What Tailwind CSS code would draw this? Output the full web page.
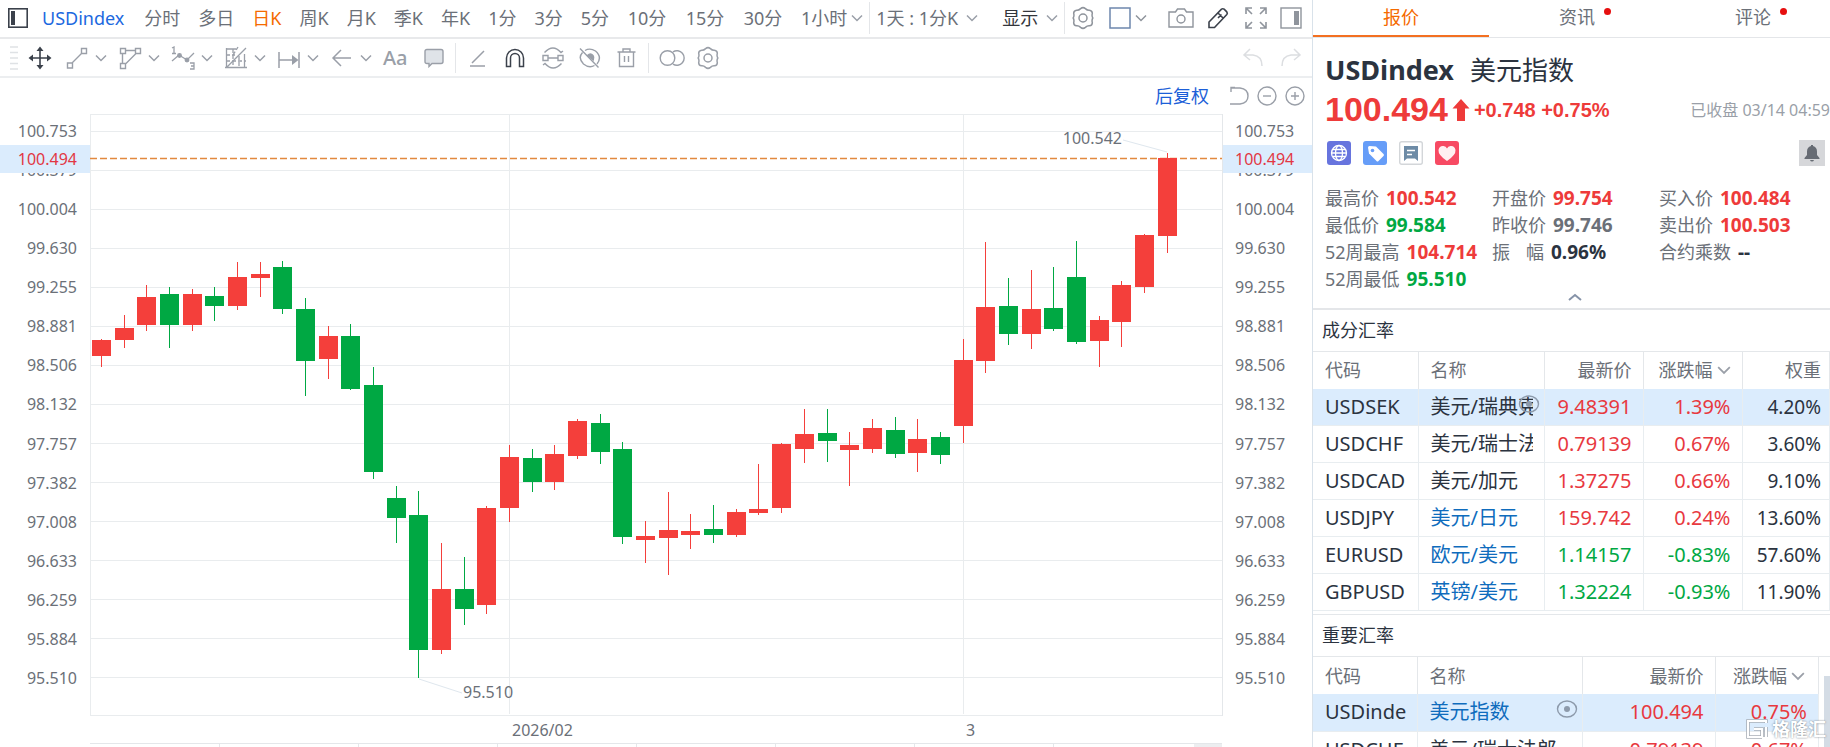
<!DOCTYPE html>
<html lang="zh-CN">
<head>
  <meta charset="UTF-8">
  <meta name="viewport" content="width=device-width, initial-scale=1.0">
  <title>USDindex 美元指数</title>
  <script src="https://cdn.jsdelivr.net/npm/@tailwindcss/browser@4"></script>
</head>
<body class="flex h-screen overflow-hidden bg-white font-['Noto_Sans','Noto_Sans_CJK_SC',sans-serif] text-[#6b7078]">

  <!-- Shared icons -->
  <svg class="hidden">
    <symbol id="chevron" viewBox="0 0 12 12"><path d="M1 3.5 6 8.5 11 3.5" fill="none" stroke="currentColor" stroke-width="1.5"/></symbol>
    <symbol id="eye" viewBox="0 0 22 18"><ellipse cx="11" cy="9" rx="9.5" ry="8" fill="none" stroke="currentColor" stroke-width="1.4"/><circle cx="11" cy="9" r="3" fill="currentColor"/></symbol>
    <symbol id="gear" viewBox="0 0 24 24"><path d="M9.6 2.6Q12 .6 14.4 2.6 16.200 4.400 18.400 4.200 21.400 4.600 21.300 7.500 20.600 10 21.800 12 20.600 14 21.300 16.500 21.400 19.400 18.400 19.800 16.200 19.600 14.400 21.400 12 23.400 9.600 21.400 7.800 19.600 5.600 19.800 2.600 19.400 2.700 16.500 3.400 14 2.200 12 3.400 10 2.700 7.500 2.600 4.600 5.600 4.200 7.800 4.400 9.600 2.600Z" fill="none" stroke="currentColor" stroke-width="1.5"/><circle cx="12" cy="12" r="4" fill="none" stroke="currentColor" stroke-width="1.5"/></symbol>
  </svg>

  <main class="flex min-w-0 flex-1 flex-col">

    <!-- Period bar -->
    <header class="flex h-[39px] shrink-0 items-center gap-[18px] overflow-hidden whitespace-nowrap border-b-2 border-[#e8e9eb] pb-0.5 pl-2 text-lg leading-9">
      <button class="-mr-1" aria-label="侧栏"><svg class="size-5" viewBox="0 0 20 20"><rect x=".8" y=".8" width="18.4" height="18.4" fill="none" stroke="#3b414b" stroke-width="1.6"/><rect x="3" y="3" width="4" height="14" fill="#3b414b"/></svg></button>
      <a href="#" class="mr-0.5 text-[#1c69e0]">USDindex</a>
      <button>分时</button>
      <button>多日</button>
      <button class="text-[#f56a00]">日K</button>
      <button>周K</button>
      <button>月K</button>
      <button>季K</button>
      <button>年K</button>
      <button>1分</button>
      <button>3分</button>
      <button>5分</button>
      <button class="w-10">10分</button>
      <button class="w-10">15分</button>
      <button class="w-10">30分</button>
      <button class="-mr-3 flex items-center gap-1">1小时<svg class="size-3 text-[#9a9fa8]"><use href="#chevron"/></svg></button>
      <span class="-mr-3 h-8 w-px bg-[#e4e6e9]"></span>
      <button class="flex items-center gap-2">1天 : 1分K<svg class="size-3 text-[#9a9fa8]"><use href="#chevron"/></svg></button>
      <button class="-mr-3 ml-1.5 flex items-center gap-2 text-[#33363b]">显示<svg class="size-3 text-[#9a9fa8]"><use href="#chevron"/></svg></button>
      <span class="-mr-3 h-8 w-px bg-[#e4e6e9]"></span>
      <div class="flex flex-1 items-center text-[#8f949c]">
        <button class="mr-3.5" aria-label="指标设置"><svg class="size-6"><use href="#gear"/></svg></button>
        <button class="flex items-center gap-1" aria-label="布局"><svg class="size-[22px]" viewBox="0 0 22 22"><rect x="1" y="1" width="20" height="20" fill="none" stroke="#6d87ad" stroke-width="1.5"/></svg><svg class="size-3"><use href="#chevron"/></svg></button>
        <button class="ml-auto" aria-label="截图"><svg class="h-5 w-[26px]" viewBox="0 0 26 20"><path d="M1 4h6.500L9.500 1h7l2 3H25v15H1z" fill="none" stroke="currentColor" stroke-width="1.4"/><circle cx="13" cy="11" r="4" fill="none" stroke="currentColor" stroke-width="1.4"/></svg></button>
        <button class="ml-3" aria-label="画线"><svg class="size-6 text-[#3b414b]" viewBox="0 0 24 24" fill="none" stroke="currentColor" stroke-width="1.600"><path d="M3 21.500V16L15.500 3.200q1.300-1 2.600 0l2.700 2.700q1 1.300 0 2.600L8.500 21.500zM12 7l5 5M15.500 8.500l-3.500 3.500"/></svg></button>
        <button class="ml-3.5" aria-label="全屏"><svg class="size-6" viewBox="0 0 24 24" fill="none" stroke="currentColor" stroke-width="1.600"><path d="M2 8V2h6M2 2l6 6M16 2h6v6M22 2l-6 6M2 16v6h6M2 22l6-6M16 22h6v-6M22 22l-6-6"/></svg></button>
        <button class="ml-3 pr-2.5" aria-label="右侧栏"><svg class="size-[22px]" viewBox="0 0 22 22"><rect x="1" y="1" width="20" height="20" fill="none" stroke="currentColor" stroke-width="1.4"/><path d="M14 4h5v14h-5z" fill="currentColor"/></svg></button>
      </div>
    </header>

    <!-- Drawing tools -->
    <div class="flex h-[39px] shrink-0 items-center border-b-2 border-[#eceef0] pl-2 text-[#9a9fa8]">
      <svg class="mr-2.5 ml-0.5 h-6 w-2" viewBox="0 0 8 24"><path d="M0 1h8M0 6.500h8M0 12h8M0 17.500h8M0 23h8" stroke="#dfe2e5" stroke-width="1.500"/></svg>
      <button class="w-[37px]" aria-label="移动"><svg class="size-6 text-[#3b414b]" viewBox="0 0 24 24"><path d="M12 3v18M3 12h18" stroke="currentColor" stroke-width="1.600"/><path d="M12 .5 15.500 5h-7zM12 23.500 15.500 19h-7zM.5 12 5 8.500v7zM23.500 12 19 8.500v7z" fill="currentColor"/></svg></button>
      <button class="flex w-[53px] items-center gap-1.5" aria-label="线段"><svg class="size-6" viewBox="0 0 24 24" fill="none" stroke="currentColor" stroke-width="1.400"><path d="M7 17 17 7M2.500 17h5v5h-5zM16.500 2.500h5v5h-5z"/></svg><svg class="size-3"><use href="#chevron"/></svg></button>
      <button class="flex w-[53px] items-center gap-1.5" aria-label="图形"><svg class="size-6" viewBox="0 0 24 24" fill="none" stroke="currentColor" stroke-width="1.400"><path d="M2.500 2.500h5v5h-5zM17.500 2.500h5v5h-5zM2.500 17.500h5v5h-5zM7.500 4.500h10M4.500 7.500v10M7.500 18 18 7.500"/></svg><svg class="size-3"><use href="#chevron"/></svg></button>
      <button class="flex w-[53px] items-center gap-1.5" aria-label="波浪"><svg class="size-6" viewBox="0 0 24 24" fill="none" stroke="currentColor" stroke-width="1.300"><path d="M1 15 8 9l8 5 7-7M1 2l2-1v6M1 7.500h4M19 17h4v6h-4M20 20h3"/><circle cx="8.500" cy="9.500" r="1.800" fill="currentColor"/><circle cx="16" cy="14" r="1.800" fill="currentColor"/></svg><svg class="size-3"><use href="#chevron"/></svg></button>
      <button class="flex w-[53px] items-center gap-1.5" aria-label="斐波那契"><svg class="size-6" viewBox="0 0 24 24" fill="none" stroke="currentColor" stroke-width="1.300"><path d="M2.500 2v20M1 21.500h22M20.500 8v14M2 3h10M2.500 21.500 22 2"/><path d="M2 9h9M2 15h20M9 3v18M15 10v11M9 9l5-8" stroke-dasharray="4 2"/></svg><svg class="size-3"><use href="#chevron"/></svg></button>
      <button class="flex w-[53px] items-center gap-1.5" aria-label="区间"><svg class="size-6" viewBox="0 0 24 24"><path d="M2 6v16M22 6v16M2 14h14" stroke="currentColor" stroke-width="1.500"/><path d="M21.500 14 15 9v10z" fill="currentColor"/></svg><svg class="size-3"><use href="#chevron"/></svg></button>
      <button class="flex w-[53px] items-center gap-1.5" aria-label="箭头"><svg class="size-6" viewBox="0 0 24 24" fill="none" stroke="currentColor" stroke-width="1.500"><path d="M21 12H3M11 4l-8 8 8 8"/></svg><svg class="size-3"><use href="#chevron"/></svg></button>
      <button class="w-[37px] text-left text-xl font-medium" aria-label="文字">Aa</button>
      <button class="w-[35px] pl-1" aria-label="气泡"><svg class="size-5" viewBox="0 0 20 20"><path d="M3 1.500h14q2 0 2 2v10q0 2-2 2H8L5 18.500v-3H3q-2 0-2-2v-10q0-2 2-2z" fill="#dfe3e8" stroke="currentColor" stroke-width="1.400"/></svg></button>
      <span class="mr-3 h-[30px] w-px bg-[#e4e6e9]"></span>
      <button class="w-[37px]" aria-label="角度"><svg class="size-5" viewBox="0 0 20 20"><path d="M16 3 4 15M2 18h15" stroke="currentColor" stroke-width="1.500"/></svg></button>
      <button class="w-[37px]" aria-label="磁铁"><svg class="size-5 text-[#3b414b]" viewBox="0 0 20 20" fill="none" stroke="currentColor" stroke-width="1.500"><path d="M1.500 18.500V10a8.500 8.500 0 0 1 17 0v8.500h-4V10a4.500 4.500 0 0 0-9 0v8.500z"/></svg></button>
      <button class="w-[37px]" aria-label="连续绘制"><svg class="size-[22px]" viewBox="0 0 22 22" fill="none" stroke="currentColor" stroke-width="1.400"><path d="M1 8.500h5v5H1zM16 8.500h5v5h-5zM6 11h10M2.500 5.500Q11-3.500 19 5.500l2-1.500M19.500 16.500Q11 25.500 3 16.500L1 18"/></svg></button>
      <button class="w-[37px]" aria-label="隐藏"><svg class="size-[22px]" viewBox="0 0 22 22" fill="none" stroke="currentColor" stroke-width="1.400"><path d="M6 3.500Q11 .5 16.500 4 23.500 10 18 17M15.500 18.500Q10 21.500 4.500 17-1.500 11 3.500 5.500M1 1.500l18.500 19"/><path d="M8.500 8.500q3-3 5.500 0 1.500 2 .3 4.500z" fill="currentColor"/></svg></button>
      <button class="w-8" aria-label="删除"><svg class="size-[21px]" viewBox="0 0 21 21" fill="none" stroke="currentColor" stroke-width="1.400"><path d="M1.500 5h18M7 5V2h7v3M3.500 8v11.500h14V8M3.500 5v3M17.500 5v3M8.500 9v6M12.500 9v6"/></svg></button>
      <span class="mr-2.5 h-[30px] w-px bg-[#e4e6e9]"></span>
      <button class="w-[37px]" aria-label="对比"><svg class="h-5 w-[26px]" viewBox="0 0 26 20" fill="none" stroke="currentColor" stroke-width="1.400"><circle cx="8.500" cy="10" r="7.300"/><path d="M14 3.800a7.300 7.300 0 1 1 0 12.400"/></svg></button>
      <button aria-label="设置"><svg class="size-6"><use href="#gear"/></svg></button>
      <div class="ml-auto flex gap-4 pr-2.5 text-[#dcdee1]">
        <button aria-label="撤销"><svg class="size-[22px]" viewBox="0 0 22 22" fill="none" stroke="currentColor" stroke-width="1.500"><path d="M8 2 2 8l6 5M2 8h9q9 1 9 11"/></svg></button>
        <button aria-label="重做"><svg class="size-[22px]" viewBox="0 0 22 22" fill="none" stroke="currentColor" stroke-width="1.500"><path d="M14 2l6 6-6 5M20 8h-9q-9 1-9 11"/></svg></button>
      </div>
    </div>

    <!-- Chart options -->
    <div class="flex h-9 shrink-0 items-center justify-end gap-2 pr-[7px] text-[#9a9fa8]">
      <button class="mr-3 text-lg text-[#1c5fd8]">后复权</button>
      <button aria-label="还原"><svg class="size-5" viewBox="0 0 20 20" fill="none" stroke="currentColor" stroke-width="1.400"><path d="M2 6V1.500h4M2 2h9q8 1 8 8t-8 8H1"/></svg></button>
      <button aria-label="缩小"><svg class="size-5" viewBox="0 0 20 20" fill="none" stroke="currentColor" stroke-width="1.400"><circle cx="10" cy="10" r="9"/><path d="M6 10h8"/></svg></button>
      <button aria-label="放大"><svg class="size-5" viewBox="0 0 20 20" fill="none" stroke="currentColor" stroke-width="1.400"><circle cx="10" cy="10" r="9"/><path d="M6 10h8M10 6v8"/></svg></button>
    </div>

    <!-- K-line chart -->
    <div class="flex min-h-0 flex-1 text-base">
      <div class="relative w-[90px] shrink-0">
        <div id="axisLeft" class="flex h-full flex-col justify-between pt-1 pr-[13px] pb-[25px] text-right leading-[26px]"></div>
        <div class="absolute inset-x-0 top-[31px] bg-[#dbecfd] pr-[13px] text-right leading-7 text-[#e23744]">100.494</div>
      </div>
      <div class="relative min-w-0 flex-1">
        <svg id="chart" class="absolute inset-0 h-full w-full" viewBox="90 114 1132 602" preserveAspectRatio="none"></svg>
        <span class="absolute top-3 right-[100px] leading-6">100.542</span>
        <span class="absolute bottom-3 left-[373px] leading-6">95.510</span>
      </div>
      <div class="relative w-[90px] shrink-0 border-l border-[#e4e7ea]">
        <div id="axisRight" class="flex h-full flex-col justify-between pt-1 pb-[25px] pl-3 leading-[26px]"></div>
        <div class="absolute inset-x-0 top-[31px] bg-[#dbecfd] pl-3 leading-7 text-[#e23744]">100.494</div>
      </div>
    </div>

    <!-- Time axis -->
    <div class="mx-[90px] flex h-[27px] shrink-0 pl-[422px] text-base leading-7">
      <span class="w-[454px]">2026/02</span>
      <span>3</span>
    </div>
    <div class="mx-[90px] flex h-1 shrink-0 overflow-hidden border-t border-[#e4e7ea]">
      <span class="w-[130px] shrink-0 border-r border-[#e4e7ea]"></span>
      <span class="w-[139px] shrink-0 border-r border-[#e4e7ea]"></span>
      <span class="w-[139px] shrink-0 border-r border-[#e4e7ea]"></span>
      <span class="w-[139px] shrink-0 border-r border-[#e4e7ea]"></span>
      <span class="w-[139px] shrink-0 border-r border-[#e4e7ea]"></span>
      <span class="w-[139px] shrink-0 border-r border-[#e4e7ea]"></span>
      <span class="w-[139px] shrink-0 border-r border-[#e4e7ea]"></span>
      <span class="ml-auto w-7 bg-[#eceef0]"></span>
    </div>
  </main>

  <!-- Quote panel -->
  <aside class="relative flex w-[518px] shrink-0 flex-col overflow-hidden border-l border-[#d9e2ea]">
    <nav class="flex h-[38px] shrink-0 border-b border-[#e4e6e9] text-lg leading-8">
      <button class="w-44 shrink-0 border-b-2 border-[#f37021] pb-px text-[#f56a00]">报价</button>
      <button class="relative w-44 shrink-0 pb-[3px]">资讯<i class="absolute top-2 right-[54px] size-[7px] rounded-full bg-[#e60f0f]"></i></button>
      <button class="relative w-44 shrink-0 pb-[3px]">评论<i class="absolute top-2 right-[54px] size-[7px] rounded-full bg-[#e60f0f]"></i></button>
    </nav>

    <section class="shrink-0 border-b-2 border-[#e4e6e9] pl-3">
      <h1 class="mt-3.5 flex items-center gap-4 text-[26px] leading-9 text-[#2b333f]"><b class="text-[27px]">USDindex</b><span>美元指数</span></h1>
      <div class="flex h-[43px] items-center whitespace-nowrap font-['Liberation_Sans',sans-serif] text-xl font-bold text-[#ee3b3a]">
        <span class="text-[34px]">100.494</span>
        <svg class="mx-1 h-6 w-[18px]" viewBox="0 0 18 24"><path d="M9 1 17.500 10.500H13V23H5V10.500H.5z" fill="currentColor"/></svg>
        <span>+0.748 +0.75%</span>
        <span class="ml-auto font-['Noto_Sans','Noto_Sans_CJK_SC',sans-serif] text-base font-normal text-[#9a9fa8]">已收盘 03/14 04:59</span>
      </div>
      <div class="mt-[9px] flex items-center gap-3 pr-[5px] pl-0.5">
        <svg class="size-6" viewBox="0 0 24 24"><rect width="24" height="24" rx="3" fill="#6774de"/><g fill="none" stroke="#fff" stroke-width="1.300"><circle cx="12" cy="12" r="7.500"/><ellipse cx="12" cy="12" rx="3.500" ry="7.500"/><path d="M4.500 12h15M6 8.500h12M6 15.500h12"/></g></svg>
        <svg class="size-6" viewBox="0 0 24 24"><rect width="24" height="24" rx="3" fill="#669df8"/><path d="M5 6.500q0-1.500 1.500-1.500L13 5.500l7.500 7.500q1 1 0 2l-5 5q-1 1-2 0L6 12.500z" fill="#fff"/><circle cx="9.500" cy="9.500" r="1.800" fill="#669df8"/></svg>
        <svg class="size-6" viewBox="0 0 24 24"><rect x=".7" y=".7" width="22.600" height="22.600" rx="2" fill="#fff" stroke="#d3d6d9" stroke-width="1.400"/><path d="M5 5h14v15l-3-2.500H8L5 20z" fill="#6d8ba6"/><path d="M8 9.500h8M8 13.500h5" stroke="#fff" stroke-width="1.500"/></svg>
        <svg class="size-6" viewBox="0 0 24 24"><rect width="24" height="24" rx="3" fill="#f74a63"/><path d="M12 20Q3 14 3.500 9 4.500 4.500 8.500 5q2.500.3 3.500 2.500Q13 5.300 15.500 5q4-.5 5 4 .5 5-8.500 11z" fill="#fff0f2"/></svg>
        <button class="ml-auto flex size-[26px] items-center justify-center bg-[#d6d7da]" aria-label="提醒"><svg class="size-[18px]" viewBox="0 0 18 18" fill="#666b73"><path d="M8 1h2v1q4 1 4 5.500V11l2.500 3v1h-15v-1L4 11V7.500Q4 3 8 2zM7 16h4q-.5 1.500-2 1.500T7 16z"/></svg></button>
      </div>
      <div class="mt-[19px] grid grid-cols-[167px_167px_1fr] whitespace-nowrap text-lg leading-[27px] [&_b]:ml-[7px] [&_b]:text-[19px]">
        <div>最高价<b class="text-[#ee3b3a]">100.542</b></div>
        <div>开盘价<b class="text-[#ee3b3a]">99.754</b></div>
        <div>买入价<b class="text-[#ee3b3a]">100.484</b></div>
        <div>最低价<b class="text-[#00a843]">99.584</b></div>
        <div>昨收价<b class="text-[#6b7078]">99.746</b></div>
        <div>卖出价<b class="text-[#ee3b3a]">100.503</b></div>
        <div>52周最高<b class="text-[#ee3b3a]">104.714</b></div>
        <div><span class="mr-4">振</span>幅<b class="text-[#2b333f]">0.96%</b></div>
        <div>合约乘数<b class="text-[#2b333f]">--</b></div>
        <div>52周最低<b class="text-[#00a843]">95.510</b></div>
      </div>
      <button class="flex h-[15px] w-full items-start justify-center pr-1.5" aria-label="收起"><svg class="h-2 w-3.5" viewBox="0 0 14 8"><path d="M1 7l6-5 6 5" fill="none" stroke="#8693a8" stroke-width="2"/></svg></button>
    </section>

    <section class="shrink-0">
      <h2 class="pl-[9px] text-lg leading-[41px] text-[#2b333f]">成分汇率</h2>
      <table class="w-full table-fixed border-t border-[#e4e7ea] text-xl text-[#2b333f] [&_td]:h-[37px] [&_td]:overflow-hidden [&_td]:border-r [&_td]:border-b [&_td]:border-[#e8edf0] [&_td]:p-0 [&_th]:h-[37px] [&_th]:border-r [&_th]:border-[#e4e7ea] [&_th]:p-0 [&_td>*]:mr-[11px] [&_td>*]:ml-3 [&_td>*]:block [&_td>*]:overflow-hidden [&_td>*]:leading-9 [&_td>*]:whitespace-nowrap">
        <colgroup><col class="w-[105px]"><col class="w-[126px]"><col class="w-[99px]"><col class="w-[99px]"><col></colgroup>
        <thead class="text-lg text-[#6b7078] [&_th]:font-normal">
          <tr>
            <th class="text-left"><span class="ml-3">代码</span></th>
            <th class="text-left"><span class="ml-3">名称</span></th>
            <th class="text-right"><span class="mr-[11px]">最新价</span></th>
            <th><button class="ml-auto mr-[11px] flex items-center gap-1">涨跌幅<svg class="size-3.5 text-[#9a9fa8]"><use href="#chevron"/></svg></button></th>
            <th class="text-right"><span class="mr-2">权重</span></th>
          </tr>
        </thead>
        <tbody id="basket"></tbody>
      </table>
    </section>

    <section class="mt-[3px] border-t border-[#e4e7ea]">
      <h2 class="pl-[9px] text-lg leading-[41px] text-[#2b333f]">重要汇率</h2>
      <div class="border-t border-[#e4e7ea] pr-[11px]">
        <table class="w-full table-fixed text-xl text-[#2b333f] [&_td]:h-[37px] [&_td]:overflow-hidden [&_td]:border-r [&_td]:border-b [&_td]:border-[#e8edf0] [&_td]:p-0 [&_th]:h-[37px] [&_th]:border-r [&_th]:border-[#e4e7ea] [&_th]:p-0 [&_td>*]:mr-[11px] [&_td>*]:ml-3 [&_td>*]:block [&_td>*]:overflow-hidden [&_td>*]:leading-9 [&_td>*]:whitespace-nowrap">
          <colgroup><col class="w-[104px]"><col class="w-[165px]"><col class="w-[133px]"><col></colgroup>
          <thead class="text-lg text-[#6b7078] [&_th]:font-normal">
            <tr>
              <th class="text-left"><span class="ml-3">代码</span></th>
              <th class="text-left"><span class="ml-3">名称</span></th>
              <th class="text-right"><span class="mr-[11px]">最新价</span></th>
              <th><button class="ml-auto mr-[13px] flex items-center gap-1">涨跌幅<svg class="size-3.5 text-[#9a9fa8]"><use href="#chevron"/></svg></button></th>
            </tr>
          </thead>
          <tbody id="major"></tbody>
        </table>
      </div>
    </section>
    <div class="absolute right-0 bottom-0 h-[71px] w-1.5 bg-[#d4dce5]"></div>

    <!-- Watermark -->
    <div class="absolute right-1 bottom-1 flex items-center gap-1 text-lg leading-7 font-bold text-white [text-shadow:0_0_2px_#6b727b]">
      <svg class="h-5 w-[22px]" viewBox="0 0 22 20" fill="none"><path d="M20 4V2H2v16h14M8 10h8v8M20 8v10" stroke="#a9afb7" stroke-width="3.600"/><path d="M20 4V2H2v16h14M8 10h8v8M20 8v10" stroke="#fff" stroke-width="2"/></svg>
      <span>格隆汇</span>
    </div>
  </aside>

  <script>
    const RED = '#f43f3b', GREEN = '#00a843';

    const prices = ['100.753', '100.379', '100.004', '99.630', '99.255', '98.881', '98.506', '98.132',
      '97.757', '97.382', '97.008', '96.633', '96.259', '95.884', '95.510'];
    for (const id of ['axisLeft', 'axisRight']) {
      document.getElementById(id).innerHTML = prices.map(p => `<span>${p}</span>`).join('');
    }

    // x, body top, body bottom, wick top, wick bottom, rising
    const candles = [
      [92,340,356,339,367,1],[115,328,340,315,348,1],[137,297,325,285,331,1],[160,294,325,287,348,0],
      [183,294,325,289,331,1],[205,296,306,287,321,0],[228,277,306,262,310,1],[251,274,278,262,297,1],
      [273,267,309,261,314,0],[296,309,361,298,396,0],[319,336,359,326,379,1],[341,336,389,324,390,0],
      [364,385,472,367,479,0],[387,498,518,486,543,0],[409,515,650,491,678,0],[432,589,650,543,654,1],
      [455,589,609,557,625,0],[477,508,605,506,614,1],[500,457,508,445,522,1],[523,458,482,449,492,0],
      [545,454,482,445,490,1],[568,421,456,419,459,1],[591,423,452,414,464,0],[613,449,537,442,544,0],
      [636,536,540,521,563,1],[659,530,538,492,575,1],[681,531,535,514,549,1],[704,529,535,505,543,0],
      [727,512,535,509,537,1],[749,509,513,464,515,1],[772,444,508,443,513,1],[795,434,449,409,463,1],
      [818,433,441,409,462,0],[840,445,450,432,486,1],[863,428,449,419,453,1],[886,430,454,417,458,0],
      [908,439,453,419,472,1],[931,437,455,432,464,0],[954,360,426,339,443,1],[976,307,361,242,373,1],
      [999,306,334,278,345,0],[1022,309,334,270,349,1],[1044,308,329,267,331,0],[1067,277,342,241,344,0],
      [1090,320,341,316,367,1],[1112,285,322,281,347,1],[1135,235,287,234,293,1],[1158,158,236,153,253,1]
    ];

    const line = (x, y, w, h) => `<rect x="${x}" y="${y}" width="${w}" height="${h}" fill="#e9ecee"/>`;
    let svg = line(90, 114, 1132, 1) + line(90, 715, 1132, 1) + line(90, 114, 1, 602) + line(509, 114, 1, 600) + line(963, 114, 1, 600);
    for (let i = 0; i < 15; i++) svg += line(91, 131 + i * 39, 1131, 1);
    svg += '<path d="M1123 140 1167 152M419 679 462 693" stroke="#dfe7ee" fill="none"/>';
    svg += '<path d="M90 158.5H1222" stroke="#e2893f" stroke-width="1.5" stroke-dasharray="7 3"/>';
    for (const [x, top, bottom, high, low, up] of candles) {
      const color = up ? RED : GREEN;
      svg += `<rect x="${x + 9}" y="${high}" width="1" height="${low - high}" fill="${color}"/>`;
      svg += `<rect x="${x}" y="${top}" width="19" height="${bottom - top}" fill="${color}"/>`;
    }
    document.getElementById('chart').innerHTML = svg;

    // code, name, last, change, weight, linked name
    const basket = [
      ['USDSEK', '美元/瑞典克朗', '9.48391', '1.39%', '4.20%', 0],
      ['USDCHF', '美元/瑞士法郎', '0.79139', '0.67%', '3.60%', 0],
      ['USDCAD', '美元/加元', '1.37275', '0.66%', '9.10%', 0],
      ['USDJPY', '美元/日元', '159.742', '0.24%', '13.60%', 1],
      ['EURUSD', '欧元/美元', '1.14157', '-0.83%', '57.60%', 1],
      ['GBPUSD', '英镑/美元', '1.32224', '-0.93%', '11.90%', 1]
    ];
    const major = [
      ['USDindex', '美元指数', '100.494', '0.75%', '', 1],
      ['USDCHF', '美元/瑞士法郎', '0.79139', '0.67%', '', 0]
    ];

    function renderRows(id, rows) {
      document.getElementById(id).innerHTML = rows.map(([code, name, last, change, weight, linked], i) => {
        const tone = change[0] === '-' ? 'text-[#00a843]' : 'text-[#e8393f]';
        const eye = i ? '' : '<svg class="absolute top-1.5 right-1 m-0! h-[18px] w-[22px] text-[#8d9aab]"><use href="#eye"/></svg>';
        return `<tr class="${i ? '' : 'bg-[#dbecfd]'}">
          <td><span>${code}</span></td>
          <td class="relative ${linked ? 'text-[#0f6cbd]' : ''}"><span>${name}</span>${eye}</td>
          <td class="text-right ${tone}"><span>${last}</span></td>
          <td class="text-right ${tone}"><span>${change}</span></td>
          ${weight ? `<td class="text-right text-[19px]"><span class="mr-2!">${weight}</span></td>` : ''}
        </tr>`;
      }).join('');
    }
    renderRows('basket', basket);
    renderRows('major', major);
  </script>
</body>
</html>
